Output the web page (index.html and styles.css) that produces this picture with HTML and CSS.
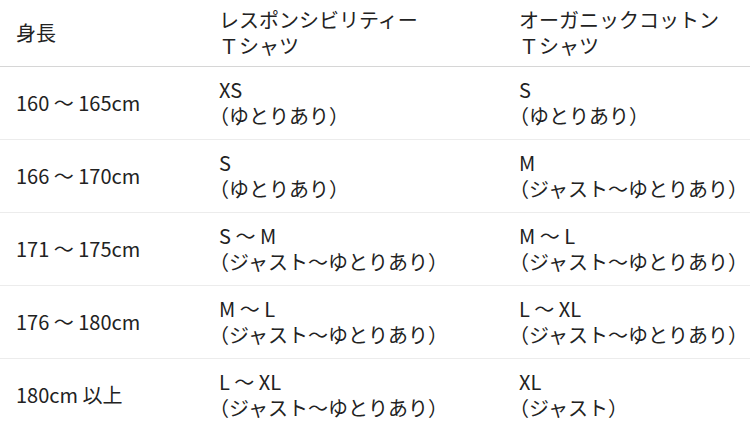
FILE: index.html
```html
<!DOCTYPE html>
<html lang="ja">
<head>
<meta charset="utf-8">
<link rel="stylesheet" href="styles.css">
</head>
<body>
<table class="size-table">
  <thead>
    <tr>
      <th class="col-height">身長</th>
      <th class="col-a">レスポンシビリティー<br>Ｔシャツ</th>
      <th class="col-b">オーガニックコットン<br>Ｔシャツ</th>
    </tr>
  </thead>
  <tbody>
    <tr>
      <td>160 〜 165cm</td>
      <td>XS<br><span class="p">（</span>ゆとりあり<span class="p">）</span></td>
      <td>S<br><span class="p">（</span>ゆとりあり<span class="p">）</span></td>
    </tr>
    <tr>
      <td>166 〜 170cm</td>
      <td>S<br><span class="p">（</span>ゆとりあり<span class="p">）</span></td>
      <td>M<br><span class="p">（</span>ジャスト〜ゆとりあり<span class="p">）</span></td>
    </tr>
    <tr>
      <td>171 〜 175cm</td>
      <td>S 〜 M<br><span class="p">（</span>ジャスト〜ゆとりあり<span class="p">）</span></td>
      <td>M 〜 L<br><span class="p">（</span>ジャスト〜ゆとりあり<span class="p">）</span></td>
    </tr>
    <tr>
      <td>176 〜 180cm</td>
      <td>M 〜 L<br><span class="p">（</span>ジャスト〜ゆとりあり<span class="p">）</span></td>
      <td>L 〜 XL<br><span class="p">（</span>ジャスト〜ゆとりあり<span class="p">）</span></td>
    </tr>
    <tr>
      <td>180cm 以上</td>
      <td>L 〜 XL<br><span class="p">（</span>ジャスト〜ゆとりあり<span class="p">）</span></td>
      <td>XL<br><span class="p">（</span>ジャスト<span class="p">）</span></td>
    </tr>
  </tbody>
</table>
</body>
</html>
```
FILE: styles.css
```css
html, body {
  margin: 0;
  padding: 0;
  background: #fff;
}
body {
  font-family: "Noto Sans CJK JP", "Noto Sans", sans-serif;
  font-size: 20px;
  line-height: 26px;
  color: #222;
}
.size-table {
  width: 750px;
  border-collapse: collapse;
  table-layout: fixed;
}
.size-table th,
.size-table td {
  text-align: left;
  vertical-align: middle;
  font-weight: normal;
  padding: 10px 16px;
  white-space: nowrap;
}
.size-table th {
  padding-top: 7px;
  padding-bottom: 7px;
  border-bottom: 1px solid #d6d6d6;
}
.size-table tbody tr {
  border-bottom: 1px solid #ececec;
}
.size-table tbody tr:last-child {
  border-bottom: none;
}
.p {
  font-feature-settings: "halt";
}
.col-height { width: 171px; }
.col-a { width: 268px; }
.col-b { width: auto; }
```
